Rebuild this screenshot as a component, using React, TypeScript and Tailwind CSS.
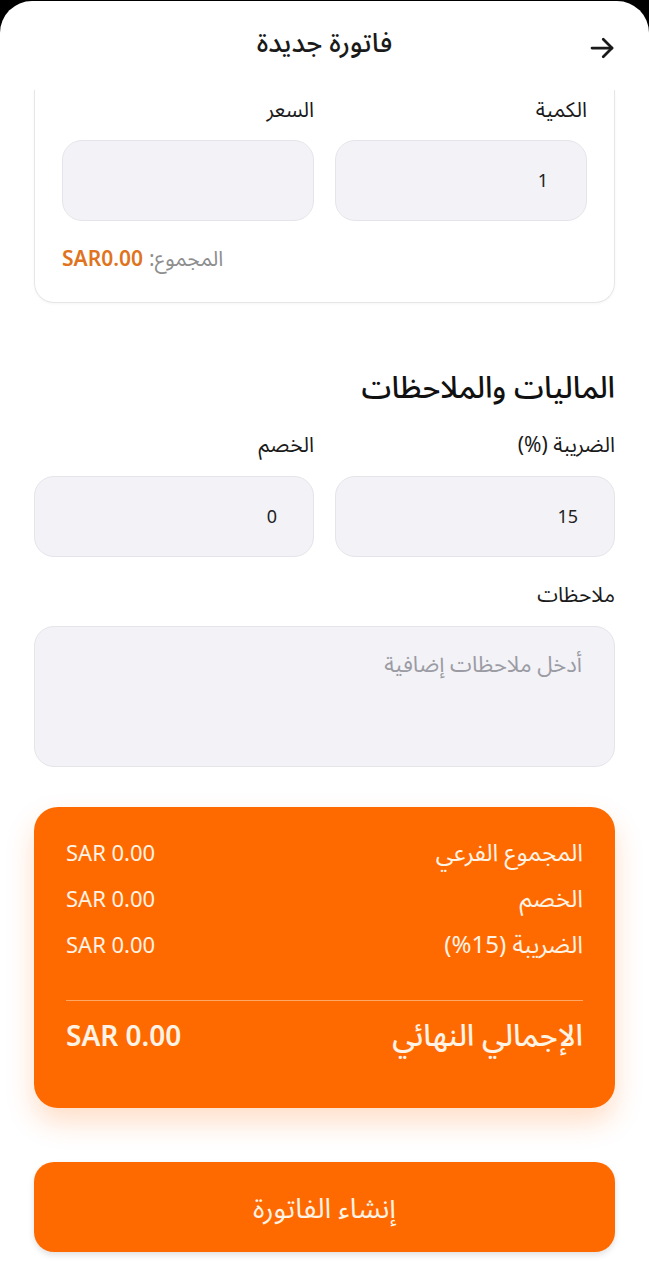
import React from 'react';

const font = { fontFamily: '"Noto Sans", "Noto Sans Arabic", "DejaVu Sans", sans-serif' };

const Field = ({ value, className = '' }: { value?: string; className?: string }) => (
  <div className={`h-[81px] rounded-[20px] bg-[#f2f2f7] border border-[#e4e4ea] flex items-center px-9 text-[18px] text-[#222] ${className}`}>
    {value}
  </div>
);

const Label = ({ children, className = '' }: { children: React.ReactNode; className?: string }) => (
  <div className={`text-[21px] leading-[22px] text-[#1a1a1a] ${className}`}>{children}</div>
);

const Row = ({ label, value }: { label: string; value: string }) => (
  <div className="flex justify-between items-baseline h-[26px] leading-[26px] text-[#fff3e6]">
    <span className="text-[24px]">{label}</span>
    <span dir="ltr" className="text-[22px]">{value}</span>
  </div>
);

export default function App() {
  return (
    <div dir="rtl" style={font} className="bg-black min-h-[1280px] pt-px">
      <div className="bg-white rounded-t-[32px] h-[1279px] overflow-hidden">
        {/* Header */}
        <div className="relative h-[89px] flex items-center justify-center">
          <button className="absolute right-[32px] top-[32px] text-[#1a1a1a]">
            <svg width="30" height="30" viewBox="0 0 24 24" fill="none" stroke="currentColor" strokeWidth="2.2" strokeLinecap="round" strokeLinejoin="round">
              <path d="M4 12h16" />
              <path d="M13 5l7 7-7 7" />
            </svg>
          </button>
          <h1 className="text-[27px] leading-8 font-medium text-[#1a1a1a] -mt-2">فاتورة جديدة</h1>
        </div>

        <div className="px-[34px]">
          {/* Item card (scrolled) */}
          <div className="border border-t-0 border-[#e6e6e6] rounded-b-[20px] px-[27px] pt-2 pb-[35px] shadow-[0_1px_3px_rgba(0,0,0,0.04)]">
            <div className="grid grid-cols-2 gap-[21px]">
              <div>
                <Label>الكمية</Label>
                <Field value="1" className="mt-5 pr-[38px]" />
              </div>
              <div>
                <Label>السعر</Label>
                <Field className="mt-5" />
              </div>
            </div>
            <div className="mt-[22px] flex justify-end items-baseline gap-1.5 h-6">
              <span className="text-[21px] text-[#8e8e8e]">المجموع:</span>
              <span dir="ltr" className="text-[21px] font-semibold text-[#e07320]">SAR0.00</span>
            </div>
          </div>

          {/* Finance & notes */}
          <h2 className="mt-[66px] text-[30px] leading-9 font-medium text-[#111]">الماليات والملاحظات</h2>

          <div className="mt-7 grid grid-cols-2 gap-[21px]">
            <div>
              <Label>الضريبة (%)</Label>
              <Field value="15" className="mt-[21px]" />
            </div>
            <div>
              <Label>الخصم</Label>
              <Field value="0" className="mt-[21px]" />
            </div>
          </div>

          <Label className="mt-[26px]">ملاحظات</Label>
          <div className="mt-[21px] h-[141px] rounded-[20px] bg-[#f2f2f7] border border-[#e4e4ea] px-8 pt-6 text-[22px] leading-6 text-[#9b9ba3]">
            أدخل ملاحظات إضافية
          </div>

          {/* Summary */}
          <div className="mt-10 h-[301px] rounded-[24px] bg-[#ff6a00] px-8 pt-[32px] shadow-[0_14px_28px_rgba(255,106,0,0.22)]">
            <div className="flex flex-col gap-[20px]">
              <Row label="المجموع الفرعي" value="SAR 0.00" />
              <Row label="الخصم" value="SAR 0.00" />
              <Row label="الضريبة (15%)" value="SAR 0.00" />
            </div>
            <div className="mt-[43px] h-px bg-[#ffa866]" />
            <div className="mt-[16px] flex justify-between items-baseline h-9 leading-9 text-[#fff3e6]">
              <span className="text-[30px] font-medium">الإجمالي النهائي</span>
              <span dir="ltr" className="text-[28px] font-semibold">SAR 0.00</span>
            </div>
          </div>

          {/* Submit */}
          <button className="mt-[54px] w-full h-[90px] rounded-[20px] bg-[#ff6a00] text-[28px] text-[#fff3e6] shadow-[0_3px_6px_rgba(0,0,0,0.12)]">
            إنشاء الفاتورة
          </button>
        </div>
      </div>
    </div>
  );
}
